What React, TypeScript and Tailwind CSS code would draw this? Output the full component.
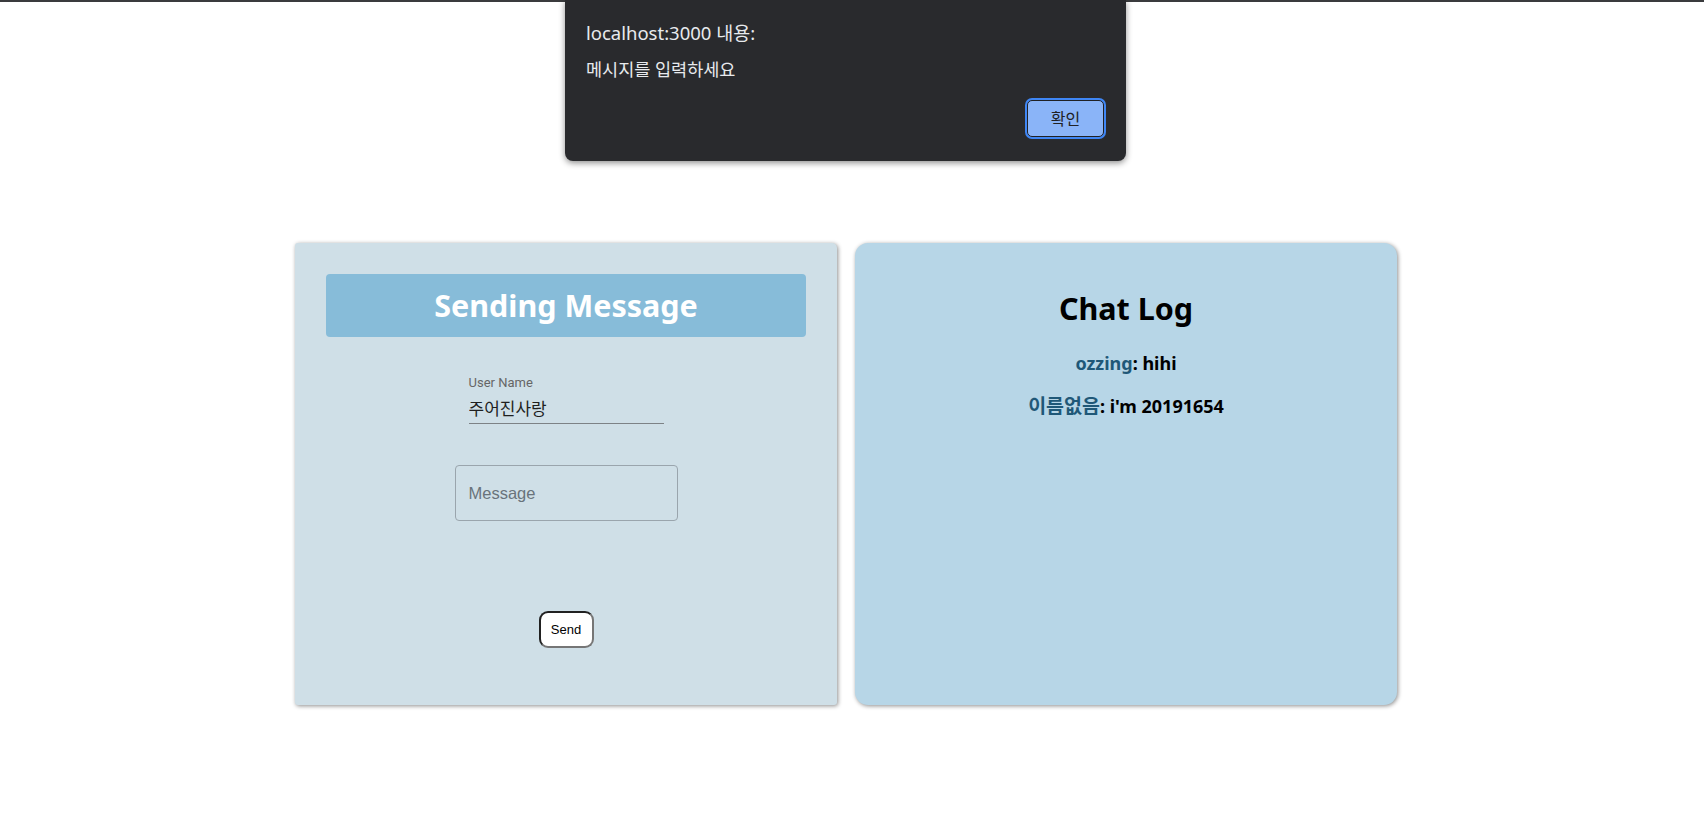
import React from 'react';

const messages = [
  { name: 'ozzing', text: 'hihi', nameClass: 'text-[#1f5878]', lineClass: 'mt-[20px]' },
  { name: '이름없음', text: "i'm 20191654", nameClass: 'text-[#1f5878] text-[19.5px] font-semibold', lineClass: 'mt-[17px]' },
];

function AlertDialog() {
  return (
    <div className="absolute top-0 left-[565px] w-[561px] h-[161px] bg-[#292a2d] rounded-b-[8px] shadow-[0_2px_6px_rgba(0,0,0,0.45)] text-[#e8eaed] font-['Noto_Sans','Noto_Sans_CJK_KR',sans-serif]">
      <div className="pt-[20px] pl-[21px] text-[18.5px] leading-[26px]">localhost:3000 내용:</div>
      <div className="mt-[11px] pl-[21px] text-[17.5px] leading-[24px]">메시지를 입력하세요</div>
      <div className="flex justify-end pr-[22px] mt-[19px]">
        <button className="w-[77px] h-[37px] rounded-[5px] border border-[#202124] bg-[#8ab4f8] ring-2 ring-[#3f86f4] text-[#202124] text-[16px]">
          확인
        </button>
      </div>
    </div>
  );
}

function SendPanel() {
  return (
    <div className="w-[542px] h-[462px] bg-[#cfdfe7] rounded-[3px] rounded-tr-[5px] shadow-[1px_1px_4px_rgba(0,0,0,0.45)] pt-[31px] px-[31px] flex flex-col items-center">
      <div className="w-full h-[63px] bg-[#87bcd9] rounded-[4px] flex items-center justify-center">
        <h1 className="text-white font-bold text-[30.5px] leading-none font-['Noto_Sans',sans-serif]">Sending Message</h1>
      </div>

      <div className="mt-[38px] w-[195px] flex flex-col font-['Roboto','Noto_Sans_CJK_KR',sans-serif]">
        <label className="text-[13px] leading-[15px] text-[#666]">User Name</label>
        <input
          defaultValue="주어진사랑"
          className="mt-[5px] h-[29px] pb-[3px] bg-transparent border-b border-[#7d8286] text-[17px] text-[#1f1f1f] outline-none"
        />
      </div>

      <input
        placeholder="Message"
        className="mt-[41px] w-[223px] h-[56px] rounded-[4px] border border-[#9aa5ad] bg-transparent pl-[13px] text-[16.5px] font-['Liberation_Sans',sans-serif] placeholder:text-[#69737b] outline-none"
      />

      <button className="mt-[90px] w-[55px] h-[37px] bg-white rounded-[9px] border-2 border-[#767676] [border-style:inset] text-[13px] text-black font-['Liberation_Sans',sans-serif]">
        Send
      </button>
    </div>
  );
}

function ChatLog() {
  return (
    <div className="w-[542px] h-[462px] bg-[#b7d6e7] rounded-[13px] shadow-[1px_1px_4px_rgba(0,0,0,0.45)] pt-[43px] text-center font-['Noto_Sans','Noto_Sans_CJK_KR',sans-serif]">
      <h2 className="text-[30.5px] leading-[44px] font-bold text-black">Chat Log</h2>
      {messages.map((m) => (
        <p key={m.name} className={`text-[18px] leading-[26px] font-bold text-black ${m.lineClass}`}>
          <span className={m.nameClass}>{m.name}</span>: {m.text}
        </p>
      ))}
    </div>
  );
}

export default function App() {
  return (
    <div className="relative w-full min-h-screen bg-white">
      <div className="h-[2px] bg-[#3a3b3d]" />
      <div className="flex pl-[295px] pt-[241px] gap-[18px]">
        <SendPanel />
        <ChatLog />
      </div>
      <AlertDialog />
    </div>
  );
}
